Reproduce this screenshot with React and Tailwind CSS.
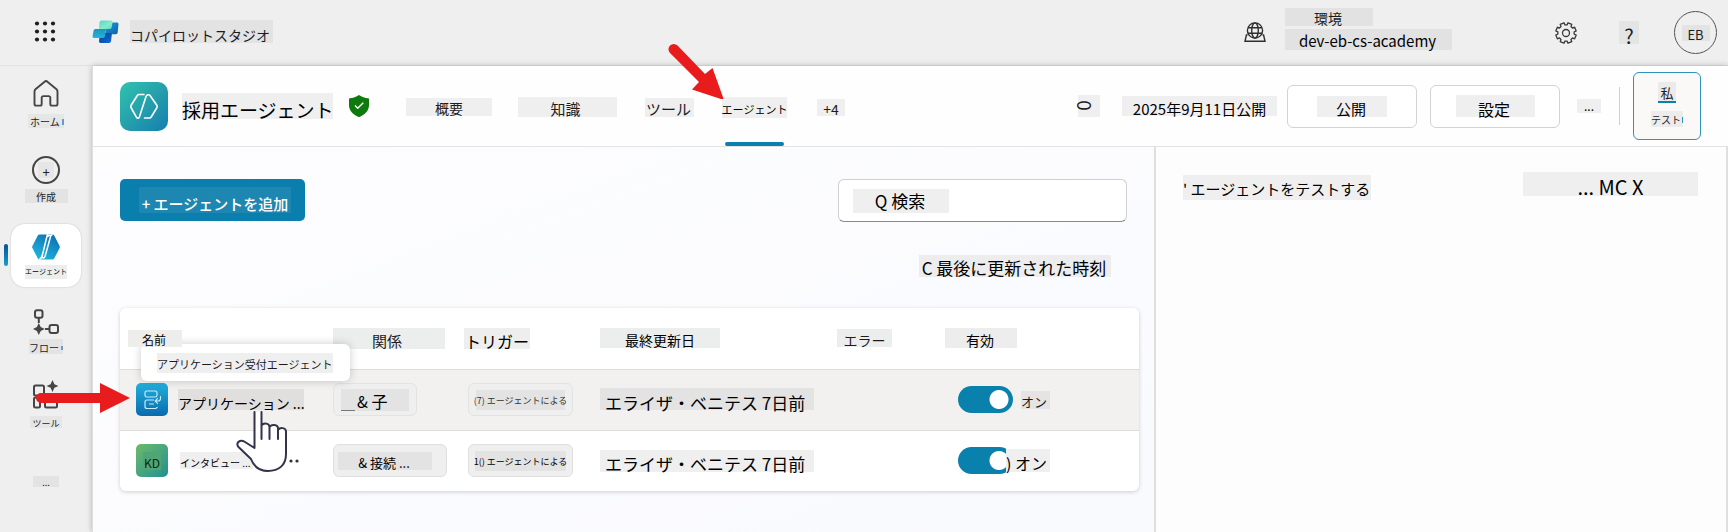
import React from 'react';

function Tag({ className = '', children, as: As = 'span' }) {
  return (
    <As className={`inline-flex shrink-0 items-center whitespace-nowrap ${className}`}>{children}</As>
  );
}

function WaffleIcon() {
  return (
    <svg width="22" height="22" viewBox="0 0 22 22" fill="#1f1f1f">
      {[3, 11, 19].map((y) => [3, 11, 19].map((x) => <circle key={`${x}-${y}`} cx={x} cy={y - 0.5} r="2.1" />))}
    </svg>
  );
}

function StudioLogo() {
  return (
    <svg width="27" height="24" viewBox="0 0 27 24">
      <defs>
        <linearGradient id="la" x1="0" y1="0" x2="1" y2="1">
          <stop offset="0" stopColor="#1b9fd8" />
          <stop offset="1" stopColor="#0b5fb0" />
        </linearGradient>
        <linearGradient id="lb" x1="0" y1="0" x2="1" y2="1">
          <stop offset="0" stopColor="#4fd6cf" />
          <stop offset="0.6" stopColor="#86ecc6" />
          <stop offset="1" stopColor="#5fd8cf" />
        </linearGradient>
        <linearGradient id="lc" x1="0" y1="0" x2="0" y2="1">
          <stop offset="0" stopColor="#1f95b8" />
          <stop offset="1" stopColor="#22b4e0" />
        </linearGradient>
        <linearGradient id="ld" x1="0" y1="0" x2="1" y2="1">
          <stop offset="0" stopColor="#0a3f9c" />
          <stop offset="1" stopColor="#0d6fce" />
        </linearGradient>
      </defs>
      <path d="M18 2.500h7a1.500 1.500 0 0 1 1.500 1.700L25.700 12.500a2 2 0 0 1-2 1.800H13L15 5z" fill="url(#la)" />
      <path d="M8 13h12l-1 8.200A2 2 0 0 1 17 23H8.500a1.500 1.500 0 0 1-1.500-1.700z" fill="url(#ld)" />
      <path d="M3.500 9H14l-1 7.200A2 2 0 0 1 11 18H2a1.500 1.500 0 0 1-1.500-1.700L1.500 10.700A2 2 0 0 1 3.500 9z" fill="url(#lc)" />
      <path d="M9.500 .500h9.500A1.500 1.500 0 0 1 20.500 2.200L19.700 7.300A2 2 0 0 1 17.700 9H7L7.500 2.200A2 2 0 0 1 9.500 .500z" fill="url(#lb)" />
    </svg>
  );
}

function GlobeIcon() {
  return (
    <svg width="22" height="22" viewBox="0 0 22 22" fill="none" stroke="#2f2f2f" strokeWidth="1.400">
      <circle cx="11" cy="8.500" r="7.600" />
      <ellipse cx="11" cy="8.500" rx="3.300" ry="7.600" />
      <path d="M4 5.800h14M4 11.200h14M3.500 13H2.400L1 19.300h20L19.600 13h-1.100" />
    </svg>
  );
}

function GearIcon() {
  const teeth = Array.from({ length: 8 }, (_, i) => {
    const a = (i * Math.PI) / 4 + Math.PI / 8;
    const at = (r, d) => `${(11 + r * Math.sin(a + d)).toFixed(2)} ${(11 - r * Math.cos(a + d)).toFixed(2)}`;
    return `${at(8.2, -0.26)} L${at(10.4, -0.2)} L${at(10.4, 0.2)} L${at(8.2, 0.26)}`;
  });
  return (
    <svg width="22" height="22" viewBox="0 0 22 22" fill="none" stroke="#3a3a3a" strokeWidth="1.300" strokeLinejoin="round">
      <path d={`M${teeth.join(' L')} Z`} />
      <circle cx="11" cy="11" r="3.500" />
    </svg>
  );
}

function HomeIcon() {
  return (
    <svg width="26" height="27" viewBox="0 0 26 27" fill="none" stroke="#454545" strokeWidth="1.900" strokeLinejoin="round">
      <path d="M1.500 11.500a3 3 0 0 1 1-2.200L11.600 1.800a2 2 0 0 1 2.800 0L23.500 9.300a3 3 0 0 1 1 2.200V24a1.600 1.600 0 0 1-1.600 1.600h-4A1.600 1.600 0 0 1 17.300 24v-6.300a1.600 1.600 0 0 0-1.600-1.600h-5.400a1.600 1.600 0 0 0-1.600 1.600V24a1.600 1.600 0 0 1-1.600 1.600h-4A1.600 1.600 0 0 1 1.500 24z" />
    </svg>
  );
}

function CreateIcon() {
  return (
    <span className="flex size-7 items-center justify-center rounded-full border-2 border-[#454545]">
      <span className="flex size-4 items-center justify-center bg-[#e6e6e6] pt-[2px] text-[13px] leading-none">+</span>
    </span>
  );
}

function AgentsIcon() {
  return (
    <svg width="28" height="26" viewBox="0 0 28 26">
      <defs>
        <linearGradient id="ag" x1="0.800" y1="0" x2="0.200" y2="1">
          <stop offset="0" stopColor="#0a6fb5" />
          <stop offset="1" stopColor="#22b8dd" />
        </linearGradient>
      </defs>
      <path d="M7.500 .500h13a2 2 0 0 1 1.700 1L27.600 12a2 2 0 0 1 0 2L22.200 24.500a2 2 0 0 1-1.700 1h-13a2 2 0 0 1-1.700-1L.400 14a2 2 0 0 1 0-2L5.800 1.500a2 2 0 0 1 1.700-1z" fill="url(#ag)" />
      <path d="M15.500 0L10.300 21.500c-.600 2.800 2 3.300 2.800 .800L18.300 3.500c.700-2.600-2-3-2.600-.500M20.500 .500c-1.500 .500-2 1.500-2.300 3M10.400 21c-.400 2.200-1.300 3.500-3 4.500" fill="none" stroke="#fff" strokeWidth="1.500" />
    </svg>
  );
}

function FlowIcon() {
  return (
    <svg width="27" height="26" viewBox="0 0 27 26" fill="none" stroke="#454545" strokeWidth="2">
      <rect x="2" y="1.200" width="7.500" height="7.500" rx="2" />
      <rect x="16.500" y="16" width="8.500" height="8" rx="2" />
      <path d="M5.800 9v5M12 20h4" />
      <path d="M5.800 14L7.700 18.100 11.800 20 7.700 21.900 5.800 26 3.900 21.900 0 20 3.900 18.100z" fill="#454545" stroke="none" />
    </svg>
  );
}

function ToolsIcon() {
  return (
    <svg width="28" height="30" viewBox="0 0 28 30" fill="none" stroke="#454545" strokeWidth="2">
      <rect x="2" y="5.500" width="10" height="10" rx="1.500" />
      <rect x="2" y="17.500" width="6" height="10" rx="1.500" />
      <rect x="13" y="17.500" width="12" height="10" rx="1.500" />
      <path d="M20.500 0L22.400 4.200 26.500 6 22.400 7.800 20.500 12 18.600 7.800 14.500 6 18.600 4.200z" fill="#454545" stroke="none" />
    </svg>
  );
}

function AgentBadge() {
  return (
    <svg width="48" height="49" viewBox="0 0 48 49" className="shrink-0">
      <defs>
        <linearGradient id="bd" x1="0" y1="0" x2="1" y2="1">
          <stop offset="0" stopColor="#2fc4ae" />
          <stop offset="0.500" stopColor="#25a0ac" />
          <stop offset="1" stopColor="#147fb0" />
        </linearGradient>
      </defs>
      <rect width="48" height="49" rx="10" fill="url(#bd)" />
      <g fill="none" stroke="#fff" strokeWidth="1.600" strokeLinecap="round" strokeLinejoin="round">
        <path d="M24 12.500h-5a2 2 0 0 0-1.700 1L11 23.500a2 2 0 0 0 0 2L16.500 35.300c.700 1.200 2.300 1.200 2.900-.300L26 14.500c.700-2 3-2.500 4.200-.700L37 23.500a2 2 0 0 1 0 2l-5.800 9.500a2 2 0 0 1-1.700 1H24.500" />
      </g>
    </svg>
  );
}

function ShieldIcon() {
  return (
    <svg width="20" height="22" viewBox="0 0 20 22" className="shrink-0">
      <path d="M10 0c2.800 2 6 3 9.300 3.200.400 0 .700.300.700.700V10c0 5.500-3.500 9.500-9.700 11.900a1 1 0 0 1-.600 0C3.500 19.500 0 15.500 0 10V3.900c0-.400.300-.700.700-.700C4 3 7.200 2 10 0z" fill="#0e7a0d" />
      <path d="M6 10.500l2.700 2.700L14.300 7.700" fill="none" stroke="#fff" strokeWidth="1.400" />
    </svg>
  );
}

function AppIcon() {
  return (
    <svg width="32" height="33" viewBox="0 0 32 33" className="shrink-0">
      <defs>
        <linearGradient id="ap" x1="0" y1="0" x2="0" y2="1">
          <stop offset="0" stopColor="#22b0dc" />
          <stop offset="1" stopColor="#0a6bad" />
        </linearGradient>
      </defs>
      <rect width="32" height="33" rx="5" fill="url(#ap)" />
      <g fill="none" stroke="#c9ecf9" strokeWidth="1.200" strokeLinecap="round" strokeLinejoin="round">
        <rect x="9" y="8" width="12" height="6" rx="1.800" />
        <path d="M17.500 17H11a2 2 0 0 0-2 2v4.500a2 2 0 0 0 2 2h8.500a2 2 0 0 0 1.700-1.200M13.500 21h4M24.500 13.500v2a2.500 2.500 0 0 1-2.500 2.500h-2.500M21.500 15.700L19.200 18l2.300 2.300" />
      </g>
    </svg>
  );
}

function Sidebar() {
  return (
    <nav className="flex w-[92px] shrink-0 flex-col bg-[#efefef] text-[#222]">
      <a href="#" className="flex h-[75px] flex-col items-center gap-[7px] pt-[14px]">
        <HomeIcon />
        <Tag className="h-[14px] w-9 justify-between bg-[#e6e6e6] pl-[2px] pt-[2px] text-[10px]">
          ホーム<span className="h-[6px] w-[2px] bg-[#5f9fd0]" />
        </Tag>
      </a>
      <a href="#" className="flex h-[82px] flex-col items-center gap-[5px] pt-[15px]">
        <CreateIcon />
        <Tag className="h-[14px] w-[43px] justify-center bg-[#e3e3e3] pt-[2px] text-[10px]">作成</Tag>
      </a>
      <a href="#" className="flex h-[64px] items-center gap-[3px] pl-1">
        <span className="h-[22px] w-1 rounded-full bg-linear-to-b from-[#0b4f96] to-[#14a0cf]" />
        <span className="flex h-[63px] w-[70px] flex-col items-center gap-[5px] rounded-[14px] bg-white pt-[10px] shadow-[0_0_2px_rgba(0,0,0,0.2)]">
          <AgentsIcon />
          <Tag className="h-[14px] bg-[#eceeed] text-[7px] text-black">エージェント</Tag>
        </span>
      </a>
      <a href="#" className="flex h-[75px] flex-col items-center gap-1 pt-[22px]">
        <FlowIcon />
        <Tag className="h-[15px] w-[34px] justify-between bg-[#e3e3e3] pt-[2px] text-[10px]">
          フロー<span className="h-[4px] w-[2px] bg-[#5f9fd0]" />
        </Tag>
      </a>
      <a href="#" className="flex h-[100px] flex-col items-center gap-[6px] pt-[18px]">
        <ToolsIcon />
        <Tag className="h-[12px] w-8 justify-center bg-[#e6e6e6] pt-[2px] text-[9px]">ツール</Tag>
      </a>
      <button type="button" className="flex justify-center pt-[14px]">
        <Tag className="h-[11px] w-[26px] justify-center bg-[#e3e3e3] pt-[2px] text-[9px]">...</Tag>
      </button>
    </nav>
  );
}

function TopHeader() {
  return (
    <header className="flex h-[66px] shrink-0 items-center justify-between border-b border-[#e2e2e2] bg-[#efefef] pr-[11px] pl-[34px]">
      <div className="flex items-center pb-[2px]">
        <button type="button" aria-label="メニュー"><WaffleIcon /></button>
        <span className="ml-9"><StudioLogo /></span>
        <Tag className="ml-[11px] h-[23px] w-[143px] bg-[#e3e3e3] pt-[6px] text-[14px]">コパイロットスタジオ</Tag>
      </div>
      <div className="flex items-center">
        <GlobeIcon />
        <div className="ml-[19px] flex w-[167px] flex-col items-start gap-[3px] pb-[8px]">
          <Tag className="h-[18px] w-[88px] justify-center bg-[#e2e2e2] pt-[2px] pr-[2px] text-[14px]">環境</Tag>
          <Tag className="h-[21px] w-[167px] justify-center bg-[#e2e2e2] pt-[2px] pr-[2px] text-[15px] text-black">dev-eb-cs-academy</Tag>
        </div>
        <button type="button" aria-label="設定" className="ml-[103px]"><GearIcon /></button>
        <button type="button" className="ml-[42px] flex"><Tag className="h-[23px] w-5 justify-center bg-[#e3e5e4] pt-[6px] text-[20px]">?</Tag></button>
        <button type="button" className="ml-[35px] flex size-[43px] items-center justify-center rounded-full border border-[#555]">
          <Tag className="h-4 w-7 justify-center bg-[#e3e3e3] pt-1 text-[13px]">EB</Tag>
        </button>
      </div>
    </header>
  );
}

function AgentBar() {
  return (
    <div className="flex h-[81px] shrink-0 items-center justify-between border-b border-[#e2e3e4] bg-[#fefefe] pr-[27px] pl-[27px]">
      <div className="flex h-full items-center">
        <AgentBadge />
        <Tag as="h1" className="ml-[14px] h-[26px] w-[151px] bg-[#efefef] pt-[6px] text-[19px] text-black">採用エージェント</Tag>
        <span className="ml-4"><ShieldIcon /></span>
        <div role="tablist" className="ml-[37px] flex h-full items-center pt-[2px]">
          <button role="tab" type="button" className="flex"><Tag className="h-[18px] w-[86px] justify-center bg-[#efefef] pt-[2px] text-[14px]">概要</Tag></button>
          <button role="tab" type="button" className="ml-[26px] flex"><Tag className="h-5 w-[99px] justify-center bg-[#efefef] pt-[2px] pr-1 text-[15px]">知識</Tag></button>
          <button role="tab" type="button" className="ml-[28px] flex"><Tag className="h-[19px] w-[49px] justify-center bg-[#efefef] pt-[2px] pr-[2px] text-[15px]">ツール</Tag></button>
          <button role="tab" type="button" aria-selected="true" className="relative ml-[28px] flex h-full items-center">
            <Tag className="h-[21px] w-[65px] justify-center bg-[#efefef] pt-1 text-[11px] text-black">エージェント</Tag>
            <span className="absolute inset-x-[3px] bottom-0 h-1 rounded-full bg-[#0b80ad]" />
          </button>
          <button role="tab" type="button" className="ml-[30px] flex"><Tag className="h-[17px] w-7 justify-center bg-[#efefef] pt-1 text-[14px]">+4</Tag></button>
        </div>
      </div>
      <div className="flex items-center">
        <Tag className="h-[22px] w-[22px] bg-[#efefef] pb-[2px] pl-[2px] text-[19px]"><span className="rotate-90">0</span></Tag>
        <Tag className="ml-[22px] h-5 w-[155px] justify-center bg-[#efefef] pt-1 text-[15px] text-black">2025年9月11日公開</Tag>
        <button type="button" className="ml-[10px] flex h-[43px] w-[130px] items-center justify-center rounded-md border border-[#d3d3d3] bg-white">
          <Tag className="h-[21px] w-[70px] justify-center bg-[#efefef] pt-1 pr-[2px] text-[15px] text-black">公開</Tag>
        </button>
        <button type="button" className="ml-[13px] flex h-[43px] w-[130px] items-center justify-center rounded-md border border-[#d3d3d3] bg-white">
          <Tag className="h-[22px] w-[79px] justify-center bg-[#efefef] pt-[6px] pr-[2px] text-[16px] text-black">設定</Tag>
        </button>
        <button type="button" className="ml-[17px] flex"><Tag className="h-[14px] w-6 justify-center bg-[#efefef] text-[12px] text-black">...</Tag></button>
        <span className="ml-[18px] h-[38px] w-px bg-[#d0d0d0]" />
        <button type="button" className="ml-[13px] flex size-[68px] flex-col items-center rounded-md border border-[#2c93ba] bg-[#faf9f8] pt-[9px]">
          <Tag className="h-[21px] w-[18px] justify-center border-b-2 border-[#0b80ad] bg-[#ebebeb] pt-[2px] text-[13px]">私</Tag>
          <Tag className="mt-[8px] h-4 w-8 justify-between bg-[#ececec] pt-[2px] text-[10px]">
            テスト<span className="h-[6px] w-px bg-[#2c93ba]" />
          </Tag>
        </button>
      </div>
    </div>
  );
}

function Toggle({ label }) {
  return (
    <input type="checkbox" role="switch" defaultChecked aria-label={label} className="h-[27px] w-[55px] shrink-0 appearance-none rounded-full bg-[radial-gradient(circle_at_41px_50%,#fff_9px,#0a80ad_10px)]" />
  );
}

function HandCursor() {
  return (
    <svg width="54" height="62" viewBox="0 0 54 62" className="absolute top-[103px] left-[116px] z-10">
      <path d="M18.500 1V37L9 31C4 28-1 32 2.500 36L15 48C18 56 24 60 32 60c11 0 18-6 18-17V20c0-5-7-5-8 0v5V18c0-5-8-5-8.500 0v6V15.500c0-5-7.500-5-8 0V1z" fill="#fff" />
      <path d="M18.500 1V37L9 31C4 28-1 32 2.500 36L15 48C18 56 24 60 32 60c11 0 18-6 18-17V20.500c0-4-6-4.500-8-1.500V28V17.500c0-4.500-7-4.500-8.500-1.500V28V16c0-4-6-4.500-8-1.500V28 1" fill="none" stroke="#33334a" strokeWidth="2" strokeLinejoin="round" strokeLinecap="round" />
    </svg>
  );
}

function AgentsTable() {
  const cell = 'p-0 text-left align-middle font-normal';
  return (
    <div className="relative mt-[31px] rounded-md bg-white shadow-[0_1px_4px_rgba(0,0,0,0.18)]">
      <table className="w-full table-fixed border-collapse">
        <colgroup>
          <col className="w-[213px]" /><col className="w-[135px]" /><col className="w-[132px]" />
          <col className="w-[237px]" /><col className="w-[108px]" /><col />
        </colgroup>
        <thead>
          <tr className="h-[61px]">
            <th className={cell}><Tag className="relative z-20 ml-2 h-[17px] w-[54px] justify-center bg-[#ededec] pt-1 pr-[2px] text-[12px] text-black">名前</Tag></th>
            <th className={cell}><Tag className="h-[21px] w-[112px] justify-center bg-[#eceeed] pt-1 pr-1 text-[15px]">関係</Tag></th>
            <th className={cell}><Tag className="-ml-1 h-[21px] w-[66px] justify-center bg-[#eeeeee] pt-[6px] text-[16px] text-black">トリガー</Tag></th>
            <th className={cell}><Tag className="h-5 w-[120px] justify-center bg-[#eceeed] pt-1 text-[14px] text-black">最終更新日</Tag></th>
            <th className={cell}><Tag className="h-[18px] w-[55px] justify-center bg-[#eceeed] pt-1 text-[14px]">エラー</Tag></th>
            <th className={cell}><Tag className="h-5 w-[72px] justify-center bg-[#ededed] pt-1 pr-[2px] text-[14px] text-black">有効</Tag></th>
          </tr>
        </thead>
        <tbody>
          <tr className="h-[61px] border-y border-[#dddddd] bg-[#f3f1f0]">
            <td className={cell}>
              <div className="flex items-center gap-[10px] pl-4">
                <AppIcon />
                <Tag className="h-[21px] w-[126px] bg-[#e0dfde] pt-[6px] text-[14px] text-black">アプリケーション ...</Tag>
              </div>
            </td>
            <td className={cell}>
              <span className="flex h-[33px] w-[84px] items-center justify-center rounded-md border border-[#e4e3e3] bg-[#f0efef]">
                <Tag className="h-[22px] w-[68px] bg-[#e3e3e3] text-[16px] text-black">
                  <span className="w-[14px] self-end border-b border-[#777]" />
                  <span className="pt-[2px] pl-[2px]">&amp; 子</span>
                </Tag>
              </span>
            </td>
            <td className={cell}>
              <span className="flex h-[33px] w-[105px] items-center justify-center rounded-md border border-[#e4e3e3] bg-[#f0efef]">
                <Tag className="h-[20px] w-[89px] justify-center bg-[#e3e3e3] pt-[2px] text-[9px] text-[#333]">(7) エージェントによる</Tag>
              </span>
            </td>
            <td className={cell}><Tag className="h-[22px] w-[214px] bg-[#e4e3e3] pt-[6px] pl-[5px] text-[17px] text-black">エライザ・ベニテス 7日前</Tag></td>
            <td className={cell} />
            <td className={cell}>
              <div className="flex items-center gap-2 pl-[13px]">
                <Toggle label="アプリケーション" />
                <Tag className="h-[18px] w-[29px] bg-[#e5e3e3] pt-1 text-[13px]">オン</Tag>
              </div>
            </td>
          </tr>
          <tr className="h-[61px]">
            <td className={cell}>
              <div className="flex items-center gap-3 pl-4">
                <span className="flex h-[33px] w-8 shrink-0 items-center justify-center rounded-[5px] bg-linear-to-br from-[#6cba66] to-[#1c9090]">
                  <Tag className="h-[18px] bg-[#4fa574] px-[1px] pt-1 text-[12px] text-[#102418]">KD</Tag>
                </span>
                <Tag className="h-[17px] w-[73px] bg-[#efefef] pt-1 text-[10px] text-black">インタビュー ...</Tag>
              </div>
            </td>
            <td className={cell}>
              <span className="flex h-[33px] w-[114px] items-center rounded-md border border-[#dfdfdf] bg-[#efefef] pl-1">
                <Tag className="h-[18px] w-[94px] justify-center bg-[#e3e3e3] pt-1 pr-[2px] text-[13px] text-black">&amp; 接続 ...</Tag>
              </span>
            </td>
            <td className={cell}>
              <span className="flex h-[33px] w-[105px] items-center justify-center rounded-md border border-[#dfdfdf] bg-[#efefef]">
                <Tag className="h-[20px] w-[91px] justify-center bg-[#e3e3e3] pt-[2px] text-[9px] text-black">1() エージェントによる</Tag>
              </span>
            </td>
            <td className={cell}><Tag className="h-[22px] w-[214px] bg-[#efefef] pt-[6px] pl-[5px] text-[17px] text-black">エライザ・ベニテス 7日前</Tag></td>
            <td className={cell} />
            <td className={cell}>
              <div className="flex items-center pl-[13px]">
                <Toggle label="インタビュー" />
                <Tag className="-ml-[7px] h-[23px] w-[44px] bg-[#efefef] pt-1 text-[16px] text-black">) オン</Tag>
              </div>
            </td>
          </tr>
        </tbody>
      </table>
      <div role="tooltip" className="absolute top-9 left-[21px] z-10 flex h-[37px] w-[209px] items-center rounded-md bg-white pl-4 shadow-[0_0_10px_rgba(0,0,0,0.2)]">
        <Tag className="h-[20px] bg-[#efefef] pt-1 text-[11px]">アプリケーション受付エージェント</Tag>
      </div>
      <HandCursor />
      <svg width="10" height="4" viewBox="0 0 10 4" className="absolute top-[151px] left-[169px]" fill="#333">
        <circle cx="2" cy="2" r="1.600" /><circle cx="8" cy="2" r="1.600" />
      </svg>
      <svg width="94" height="30" viewBox="0 0 94 30" className="absolute top-[75px] -left-[84px] z-20" fill="#e81c1c">
        <path d="M5 10H64V0L94 15 64 30V20H5A5 5 0 0 1 5 10z" />
      </svg>
    </div>
  );
}

export default function App() {
  return (
    <div className="relative flex min-h-screen flex-col overflow-hidden bg-[#efefef] font-['Noto_Sans_CJK_JP','Noto_Sans',sans-serif] leading-none text-[#1c1c1c]">
      <TopHeader />
      <div className="flex flex-1">
        <Sidebar />
        <main className="flex min-w-0 flex-1 flex-col border-l border-[#dedede] shadow-[0_0_6px_rgba(0,0,0,0.25)]">
          <AgentBar />
          <div className="flex flex-1">
            <section className="min-w-0 flex-1 bg-linear-to-br from-[#fdfdfe] to-[#f9fafe] pt-8 pr-[15px] pl-[27px]">
              <div className="flex items-start justify-between pr-3">
                <button type="button" className="flex h-[42px] w-[185px] items-center rounded-[5px] bg-[#0a7fad] pl-[19px]">
                  <Tag className="h-[26px] w-[152px] justify-center bg-[#1d87b1] pt-[6px] text-[15px] font-medium text-white">+ エージェントを追加</Tag>
                </button>
                <div className="flex h-[43px] w-[289px] items-center rounded-md border border-[#cfcfcf] border-b-[#8a8a8a] bg-white pl-[14px]">
                  <input type="text" aria-label="検索" placeholder="Q 検索" className="h-6 w-24 bg-[#efefef] pr-[2px] text-center text-[17px] text-black outline-none placeholder:text-black" />
                </div>
              </div>
              <div className="mt-[33px] flex justify-end pr-[28px]">
                <Tag className="h-[22px] w-[192px] justify-center bg-[#ededee] pt-[2px] pr-[2px] text-[17px] text-black">C 最後に更新された時刻</Tag>
              </div>
              <AgentsTable />
            </section>
            <aside className="flex w-[574px] shrink-0 items-start justify-between border-x-2 border-[#dfdfdf] bg-[#fdfdfe] pt-[25px] pr-7 pl-[27px]">
              <Tag as="h2" className="mt-[3px] h-[25px] w-[188px] bg-[#efefef] pt-[2px] text-[15px] text-black">' エージェントをテストする</Tag>
              <Tag className="h-6 w-[175px] justify-center bg-[#efefef] pt-[6px] text-[20px] text-black">... MC X</Tag>
            </aside>
          </div>
        </main>
      </div>
      <svg width="56" height="56" viewBox="0 0 56 56" className="absolute top-[43px] left-[668px] z-30" fill="#e81c1c">
        <path d="M9.500 2.500L37 31 44.500 25 56 57 24 46.500 31 39 2 10A5.300 5.300 0 0 1 9.500 2.500z" />
      </svg>
    </div>
  );
}
